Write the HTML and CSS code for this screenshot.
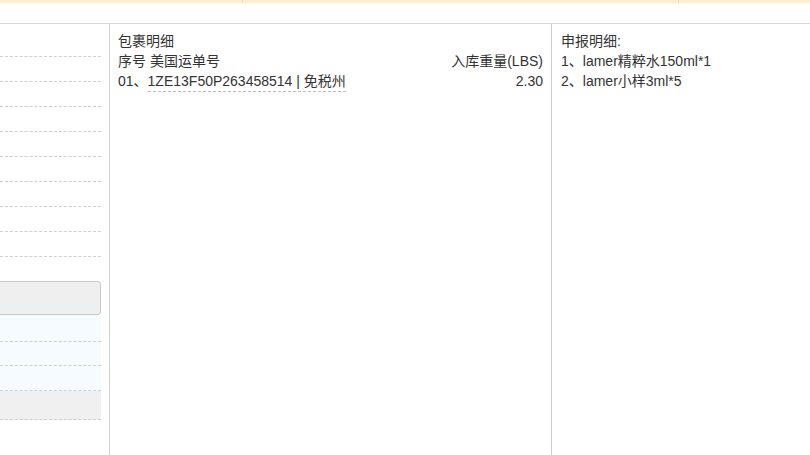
FILE: index.html
```html
<!DOCTYPE html>
<html>
<head>
<meta charset="utf-8">
<link rel="stylesheet" href="styles.css">
</head>
<body>
<div class="topbar">
  <div class="seg seg-a"></div>
  <div class="seg seg-b"></div>
  <div class="seg seg-c"></div>
</div>
<div class="header-space"></div>
<div class="main">
  <div class="col-left">
    <div class="rows">
      <div class="row"></div>
      <div class="row"></div>
      <div class="row"></div>
      <div class="row"></div>
      <div class="row"></div>
      <div class="row"></div>
      <div class="row"></div>
      <div class="row"></div>
      <div class="row"></div>
    </div>
    <div class="btn"></div>
    <div class="row blue r1"></div>
    <div class="row blue r2"></div>
    <div class="row blue r3"></div>
    <div class="row gray"></div>
  </div>
  <div class="col-mid">
    <div class="line">包裹明细</div>
    <div class="line split"><span>序号 美国运单号</span><span>入库重量(LBS)</span></div>
    <div class="line split"><span>01、<span class="track">1ZE13F50P263458514 | 免税州</span></span><span>2.30</span></div>
  </div>
  <div class="col-right">
    <div class="line">申报明细:</div>
    <div class="line">1、lamer精粹水150ml*1</div>
    <div class="line">2、lamer小样3ml*5</div>
  </div>
</div>
</body>
</html>
```

FILE: styles.css
```css
html, body {
  margin: 0;
  padding: 0;
  background: #fff;
}
body {
  font-family: "Liberation Sans", "Noto Sans CJK SC", sans-serif;
  font-size: 14px;
  color: #333;
  width: 810px;
  height: 455px;
  overflow: hidden;
}
.topbar {
  display: flex;
  height: 3px;
  background: #fcf0d0;
  border-bottom: 1px solid #fdf8ea;
}
.seg { height: 3px; }
.seg-a { width: 242px; border-right: 1px solid #e3dccb; }
.seg-b { width: 435px; border-right: 1px solid #e3dccb; }
.seg-c { flex: 1; }
.header-space {
  height: 19px;
  border-bottom: 1px solid #d8d8d8;
}
.main {
  display: flex;
  height: 431px;
}
.col-left {
  width: 101px;
  padding-right: 8px;
  border-right: 1px solid #cfcfcf;
  padding-top: 8px;
}
.row {
  height: 24px;
  border-bottom: 1px dashed #cfcfcf;
}
.btn {
  margin-top: 24px;
  height: 32px;
  margin-left: -4px;
  background: #efefef;
  border: 1px solid #c9c9c9;
  border-radius: 3px;
}
.row.blue { background: #f5fbff; }
.row.r1 { height: 26px; }
.row.r2 { height: 23px; }
.row.r3 { height: 24px; }
.row.gray { background: #f0f0f0; height: 28px; }
.col-mid {
  width: 425px;
  padding: 7px 8px 0 8px;
  border-right: 1px solid #cfcfcf;
}
.col-right {
  flex: 1;
  padding: 7px 8px 0 9px;
}
.line {
  line-height: 20px;
  white-space: nowrap;
}
.split {
  display: flex;
  justify-content: space-between;
}
.track {
  border-bottom: 1px dashed #bdbdbd;
  padding-bottom: 2px;
}
```
